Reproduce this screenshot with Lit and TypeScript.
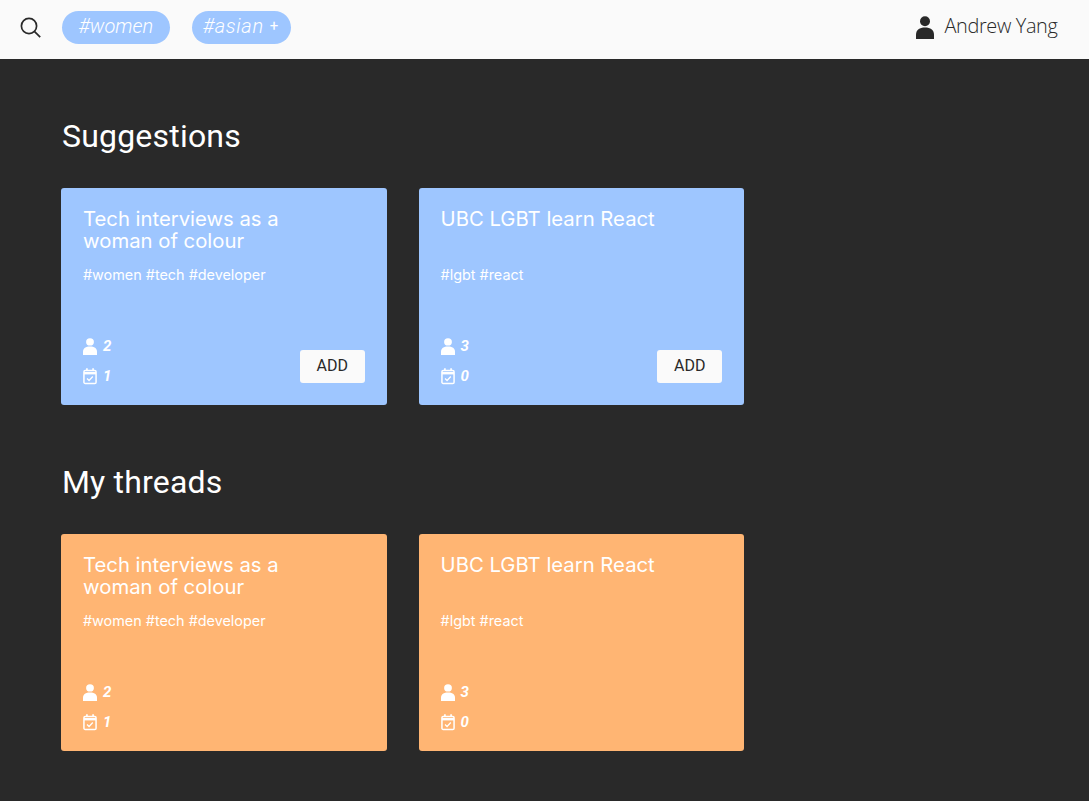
import { LitElement, html, css } from "lit";
import { customElement } from "lit/decorators.js";

const person = (w: number, h: number) => html`<svg class="person" width=${w} height=${h} viewBox="0 0 18 23" preserveAspectRatio="none" fill="currentColor"><circle cx="9" cy="5.3" r="5"/><path d="M0 23v-4.4C0 14 3.6 11.6 9 11.6s9 2.4 9 7V23z"/></svg>`;
const calendar = html`<svg width="14" height="18" viewBox="0 0 15 18" fill="none" stroke="currentColor"><rect x="1" y="3" width="13" height="14" rx="1.4" stroke-width="1.6"/><path d="M1 6h13" stroke-width="2.6"/><path d="M4.2.6v3M10.8.6v3" stroke-width="1.8"/><path d="M4.3 11.6l2.2 2.2 4-4.2" stroke-width="1.4"/></svg>`;

interface Thread { title: string; tags: string; people: number; events: number; }
const threads: Thread[] = [
  { title: "Tech interviews as a woman of colour", tags: "#women #tech #developer", people: 2, events: 1 },
  { title: "UBC LGBT learn React", tags: "#lgbt #react", people: 3, events: 0 },
];

@customElement("app-root")
export class AppRoot extends LitElement {
  static styles = css`
    :host { display: block; min-height: 801px; background: #292929; font-family: "Roboto", "Liberation Sans", sans-serif; color: #fff; }
    .top { height: 59px; background: #fafafa; display: flex; align-items: center; padding: 0 31.5px 5px 20px; box-sizing: border-box; }
    .search { color: #292929; display: block; margin: 0 21px 0 0; }
    .chip { height: 33px; border-radius: 17px; background: #9ec6ff; color: #fff; font-style: italic; font-weight: 300; font-size: 20px; display: flex; align-items: center; box-sizing: border-box; padding: 0 16.5px 3px; margin-right: 22px; }
    .chip.b { padding: 0 13px 3px 11px; letter-spacing: 0.7px; }
    .chip .plus { font-size: 15px; margin-left: 6px; font-style: normal; font-weight: 400; letter-spacing: 0; }
    .user { margin-left: auto; display: flex; align-items: center; gap: 11px; color: #292929; font-family: "Open Sans", sans-serif; font-size: 19.9px; font-weight: 300; letter-spacing: -0.35px; }
    .user span { padding-bottom: 3px; }
    main { padding: 58px 0 0 61.4px; }
    h2 { margin: 0 0 33px 0.6px; font-size: 32px; font-weight: 400; line-height: 38px; color: #fff; letter-spacing: 0.2px; }
    .grid { display: flex; gap: 32.3px; margin-bottom: 58.4px; }
    .card { width: 325.3px; height: 217px; border-radius: 3px; box-sizing: border-box; padding: 20px 22px 18px 21.6px; display: flex; flex-direction: column; }
    .blue { background: #9ec6ff; }
    .orange { background: #ffb573; }
    .title { font-family: "Inter", sans-serif; font-size: 20.3px; font-weight: 400; line-height: 22px; height: 44px; width: 230px; }
    .tags { font-family: "Inter", sans-serif; font-size: 14.4px; font-weight: 400; line-height: 18px; margin-top: 14px; }
    .bottom { margin-top: auto; display: flex; justify-content: space-between; align-items: flex-end; }
    .stats { display: flex; flex-direction: column; gap: 11.5px; margin-bottom: 2.5px; }
    .stat { display: flex; align-items: center; gap: 6px; font-size: 15px; font-weight: 700; font-style: italic; height: 18px; }
    .stat svg { display: block; }
    button { width: 65px; height: 33px; margin-bottom: 4px; border: none; border-radius: 3px; background: #fafafa; color: #292929; font: 400 16px "Roboto", sans-serif; padding: 0 0 2px; }
  `;

  card(t: Thread, color: string, add: boolean) {
    return html`<div class="card ${color}">
      <div class="title">${t.title}</div>
      <div class="tags">${t.tags}</div>
      <div class="bottom">
        <div class="stats">
          <div class="stat">${person(14, 17)}<span>${t.people}</span></div>
          <div class="stat">${calendar}<span>${t.events}</span></div>
        </div>
        ${add ? html`<button>ADD</button>` : ""}
      </div>
    </div>`;
  }

  render() {
    return html`
      <div class="top">
        <svg class="search" width="21" height="21" viewBox="0 0 21 21" fill="none" stroke="currentColor" stroke-width="1.7"><circle cx="9" cy="9" r="7.6"/><path d="M14.6 14.6L20.2 20.2"/></svg>
        <div class="chip">#women</div>
        <div class="chip b">#asian<span class="plus">+</span></div>
        <div class="user">${person(18, 23)}<span>Andrew Yang</span></div>
      </div>
      <main>
        <h2>Suggestions</h2>
        <div class="grid">${threads.map((t) => this.card(t, "blue", true))}</div>
        <h2>My threads</h2>
        <div class="grid">${threads.map((t) => this.card(t, "orange", false))}</div>
      </main>
    `;
  }
}
